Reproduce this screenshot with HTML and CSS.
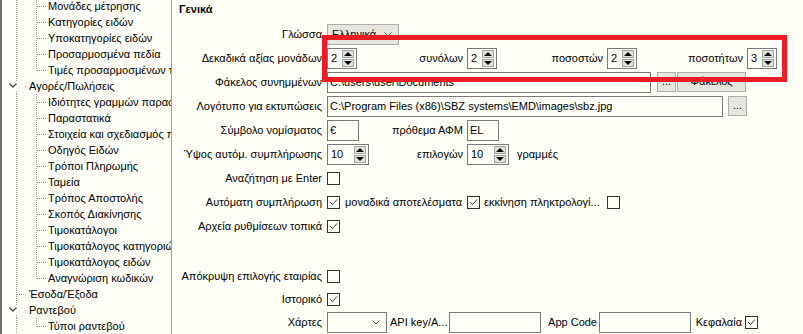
FILE: index.html
```html
<!DOCTYPE html>
<html lang="el">
<head>
    <meta charset="utf-8">
    <title>Ρυθμίσεις - Γενικά</title>
    <link rel="stylesheet" href="styles.css">
</head>
<body>
<div id="screen">
    <div id="tree">
        <div class="list">
            <div class="node"><i class="ga v"></i><i class="gb tee"></i><span>Μονάδες μέτρησης</span></div>
            <div class="node"><i class="ga v"></i><i class="gb tee"></i><span>Κατηγορίες ειδών</span></div>
            <div class="node"><i class="ga v"></i><i class="gb tee"></i><span>Υποκατηγορίες ειδών</span></div>
            <div class="node"><i class="ga v"></i><i class="gb tee"></i><span>Προσαρμοσμένα πεδία</span></div>
            <div class="node"><i class="ga v"></i><i class="gb ell"></i><span>Τιμές προσαρμοσμένων τιμών</span></div>
            <div class="node top"><i class="ga exp"><svg width="24" height="16"><path d="M7.5 5.5l3.5 3.5 3.5-3.5"/></svg></i><span>Αγορές/Πωλήσεις</span></div>
            <div class="node"><i class="ga v"></i><i class="gb tee"></i><span>Ιδιότητες γραμμών παραστατικών</span></div>
            <div class="node"><i class="ga v"></i><i class="gb tee"></i><span>Παραστατικά</span></div>
            <div class="node"><i class="ga v"></i><i class="gb tee"></i><span>Στοιχεία και σχεδιασμός παραστατικών</span></div>
            <div class="node"><i class="ga v"></i><i class="gb tee"></i><span>Οδηγός Ειδών</span></div>
            <div class="node"><i class="ga v"></i><i class="gb tee"></i><span>Τρόποι Πληρωμής</span></div>
            <div class="node"><i class="ga v"></i><i class="gb tee"></i><span>Ταμεία</span></div>
            <div class="node"><i class="ga v"></i><i class="gb tee"></i><span>Τρόπος Αποστολής</span></div>
            <div class="node"><i class="ga v"></i><i class="gb tee"></i><span>Σκοπός Διακίνησης</span></div>
            <div class="node"><i class="ga v"></i><i class="gb tee"></i><span>Τιμοκατάλογοι</span></div>
            <div class="node"><i class="ga v"></i><i class="gb tee"></i><span>Τιμοκατάλογος κατηγοριών</span></div>
            <div class="node"><i class="ga v"></i><i class="gb tee"></i><span>Τιμοκατάλογος ειδών</span></div>
            <div class="node"><i class="ga v"></i><i class="gb ell"></i><span>Αναγνώριση κωδικών</span></div>
            <div class="node top"><i class="ga leaf"></i><span>Έσοδα/Έξοδα</span></div>
            <div class="node top"><i class="ga exp"><svg width="24" height="16"><path d="M7.5 5.5l3.5 3.5 3.5-3.5"/></svg></i><span>Ραντεβού</span></div>
            <div class="node"><i class="ga v"></i><i class="gb ell"></i><span>Τύποι ραντεβού</span></div>
        </div>
    </div>

    <div id="form">
        <div class="title">Γενικά</div>

        <div class="row">
            <span class="lbl">Γλώσσα</span>
            <div class="combo lang">Ελληνικά<svg width="8" height="5"><path d="M0.5 0.5l3.5 3.5 3.5-3.5"/></svg></div>
        </div>

        <div class="row">
            <span class="lbl">Δεκαδικά αξίας μονάδων</span>
            <div class="spin"><span>2</span><span class="arrows"><i class="up"></i><i class="dn"></i></span></div>
            <span class="sub s110">συνόλων</span>
            <div class="spin"><span>2</span><span class="arrows"><i class="up"></i><i class="dn"></i></span></div>
            <span class="sub s110">ποσοστών</span>
            <div class="spin"><span>2</span><span class="arrows"><i class="up"></i><i class="dn"></i></span></div>
            <span class="sub s110">ποσοτήτων</span>
            <div class="spin"><span>3</span><span class="arrows"><i class="up"></i><i class="dn"></i></span></div>
        </div>

        <div class="row">
            <span class="lbl">Φάκελος συνημμένων</span>
            <div class="field attach">C:\users\user\Documents</div>
            <div class="btn dots gap6">...</div>
            <div class="btn folder">Φάκελος</div>
        </div>

        <div class="row">
            <span class="lbl">Λογότυπο για εκτυπώσεις</span>
            <div class="field logo">C:\Program Files (x86)\SBZ systems\EMD\images\sbz.jpg</div>
            <div class="btn dots gap5">...</div>
        </div>

        <div class="row">
            <span class="lbl">Σύμβολο νομίσματος</span>
            <div class="field short">€</div>
            <span class="sub s108">πρόθεμα ΑΦΜ</span>
            <div class="field short">EL</div>
        </div>

        <div class="row">
            <span class="lbl">Ύψος αυτόμ. συμπλήρωσης</span>
            <div class="spin wide"><span>10</span><span class="arrows"><i class="up"></i><i class="dn"></i></span></div>
            <span class="sub s98">επιλογών</span>
            <div class="spin wide"><span>10</span><span class="arrows"><i class="up"></i><i class="dn"></i></span></div>
            <span class="after">γραμμές</span>
        </div>

        <div class="row">
            <span class="lbl">Αναζήτηση με Enter</span>
            <i class="cb"></i>
        </div>

        <div class="row">
            <span class="lbl">Αυτόματη συμπλήρωση</span>
            <i class="cb"><svg width="11" height="11"><path d="M2 5l2.5 2.5 4.5-5"/></svg></i>
            <span class="opt">μοναδικά αποτελέσματα</span>
            <i class="cb"><svg width="11" height="11"><path d="M2 5l2.5 2.5 4.5-5"/></svg></i>
            <span class="opt">εκκίνηση πληκτρολογί...</span>
            <i class="cb"></i>
        </div>

        <div class="row">
            <span class="lbl">Αρχεία ρυθμίσεων τοπικά</span>
            <i class="cb"><svg width="11" height="11"><path d="M2 5l2.5 2.5 4.5-5"/></svg></i>
        </div>

        <div class="row blank"></div>

        <div class="row">
            <span class="lbl">Απόκρυψη επιλογής εταιρίας</span>
            <i class="cb"></i>
        </div>

        <div class="row tight">
            <span class="lbl">Ιστορικό</span>
            <i class="cb"><svg width="11" height="11"><path d="M2 5l2.5 2.5 4.5-5"/></svg></i>
        </div>

        <div class="row">
            <span class="lbl">Χάρτες</span>
            <div class="combo maps"><svg width="8" height="5"><path d="M0.5 0.5l3.5 3.5 3.5-3.5"/></svg></div>
            <span class="api">API key/A...</span>
            <div class="field key"></div>
            <span class="appcode">App Code</span>
            <div class="field key"></div>
            <span class="caps">Κεφαλαία</span>
            <i class="cb"><svg width="11" height="11"><path d="M2 5l2.5 2.5 4.5-5"/></svg></i>
        </div>
    </div>

    <!-- highlight frame drawn over the decimals row -->
    <div class="mark"></div>
</div>
</body>
</html>
```

FILE: styles.css
```css
* {
    box-sizing: border-box;
}

body {
    margin: 0;
    background-color: #fffff7;
    color: #000;
    font-family: "Liberation Sans", Arial, sans-serif;
    font-size: 11px;
}

#screen {
    position: relative;
    display: flex;
    width: 803px;
    height: 334px;
    overflow: hidden;
}

/* tree */

#tree {
    flex: none;
    width: 172px;
    height: 334px;
    border-left: 2px solid #6e6e6e;
    border-right: 1px solid #a0a0a0;
    overflow: hidden;
}

#tree .list {
    margin-top: -2px;
}

.node {
    display: flex;
    align-items: center;
    height: 16px;
    white-space: nowrap;
}

.node span {
    margin-left: 2px;
}

.node.top span {
    margin-left: 3px;
}

.ga, .gb {
    display: block;
    flex: none;
    height: 16px;
}

.ga {
    width: 24px;
}

.gb {
    width: 20px;
}

.v {
    background: repeating-linear-gradient(to bottom, #9a9a9a 0 1px, transparent 1px 2px) 14px 0 / 1px 16px no-repeat;
}

.tee {
    background:
        repeating-linear-gradient(to bottom, #9a9a9a 0 1px, transparent 1px 2px) 10px 0 / 1px 16px no-repeat,
        repeating-linear-gradient(to right, #9a9a9a 0 1px, transparent 1px 2px) 11px 8px / 9px 1px no-repeat;
}

.ell {
    background:
        repeating-linear-gradient(to bottom, #9a9a9a 0 1px, transparent 1px 2px) 10px 0 / 1px 9px no-repeat,
        repeating-linear-gradient(to right, #9a9a9a 0 1px, transparent 1px 2px) 11px 8px / 9px 1px no-repeat;
}

.leaf {
    background:
        repeating-linear-gradient(to bottom, #9a9a9a 0 1px, transparent 1px 2px) 14px 0 / 1px 16px no-repeat,
        repeating-linear-gradient(to right, #9a9a9a 0 1px, transparent 1px 2px) 15px 8px / 9px 1px no-repeat;
}

.exp {
    background:
        repeating-linear-gradient(to bottom, #9a9a9a 0 1px, transparent 1px 2px) 14px 0 / 1px 3px no-repeat,
        repeating-linear-gradient(to bottom, #9a9a9a 0 1px, transparent 1px 2px) 14px 13px / 1px 3px no-repeat,
        linear-gradient(#9a9a9a, #9a9a9a) 23px 8px / 1px 1px no-repeat;
}

.exp svg path {
    fill: none;
    stroke: #444;
    stroke-width: 1.3;
}

/* form */

#form {
    flex: 1;
}

.title {
    height: 22px;
    padding: 3px 0 0 7px;
    font-weight: bold;
    line-height: 13px;
}

.row {
    display: flex;
    align-items: center;
    height: 24px;
    white-space: nowrap;
}

.row.blank {
    height: 26px;
}

.row.tight {
    height: 22px;
}

.lbl {
    flex: none;
    width: 155px;
    padding-right: 5px;
    text-align: right;
}

.sub {
    flex: none;
    padding-right: 4px;
    text-align: right;
}

.s110 { width: 110px; }
.s108 { width: 108px; }
.s98 { width: 98px; }

.after {
    margin-left: 8px;
}

.field {
    flex: none;
    height: 21px;
    padding: 0 2px;
    border: 1px solid #7a7a7a;
    line-height: 19px;
    overflow: hidden;
}

.field.attach { width: 324px; }
.field.logo { width: 396px; }
.field.short { width: 32px; }
.field.key { width: 92px; }

.btn {
    flex: none;
    height: 20px;
    border: 1px solid #adadad;
    background-color: #e6e6df;
    line-height: 17px;
    text-align: center;
}

.btn.dots { width: 19px; }
.btn.folder { width: 69px; margin-left: 1px; }
.gap6 { margin-left: 6px; }
.gap5 { margin-left: 5px; }

.combo {
    flex: none;
    display: flex;
    align-items: center;
    justify-content: space-between;
    height: 21px;
    padding: 0 6px 0 4px;
}

.combo svg path {
    fill: none;
    stroke: #6a6a6a;
    stroke-width: 1;
}

.combo.lang {
    width: 72px;
    border: 1px solid #adadad;
    background-color: #e6e6df;
}

.combo.maps {
    width: 60px;
    justify-content: flex-end;
    padding-right: 6px;
    border: 1px solid #7a7a7a;
}

.spin {
    flex: none;
    display: flex;
    align-items: center;
    justify-content: space-between;
    width: 30px;
    height: 21px;
    padding: 0 2px 0 3px;
    border: 1px solid #7a7a7a;
}

.spin.wide {
    width: 42px;
}

.arrows {
    display: flex;
    flex-direction: column;
    gap: 1px;
}

.up, .dn {
    position: relative;
    display: block;
    width: 12px;
    height: 8px;
    border: 1px solid #a0a0a0;
    background-color: #e2e2e0;
}

.up::after, .dn::after {
    content: "";
    position: absolute;
    left: 1px;
    border-left: 4px solid transparent;
    border-right: 4px solid transparent;
}

.up::after {
    top: 1px;
    border-bottom: 4px solid #000;
}

.dn::after {
    top: 1px;
    border-top: 4px solid #000;
}

.cb {
    flex: none;
    display: block;
    width: 13px;
    height: 13px;
    border: 1px solid #333;
}

.cb svg {
    display: block;
}

.cb svg path {
    fill: none;
    stroke: #333;
    stroke-width: 1;
}

.opt {
    flex: none;
    width: 127px;
    padding-left: 5px;
}

.opt + .cb + .opt {
    padding-left: 4px;
}

.api {
    flex: none;
    width: 62px;
    padding-left: 3px;
}

.appcode {
    flex: none;
    width: 58px;
    padding-right: 2px;
    text-align: right;
}

.caps {
    flex: none;
    width: 54px;
    padding-right: 3px;
    text-align: right;
}

.mark {
    position: absolute;
    left: 322px;
    top: 35px;
    width: 465px;
    height: 47px;
    border: 5px solid #ed1c24;
}
```
